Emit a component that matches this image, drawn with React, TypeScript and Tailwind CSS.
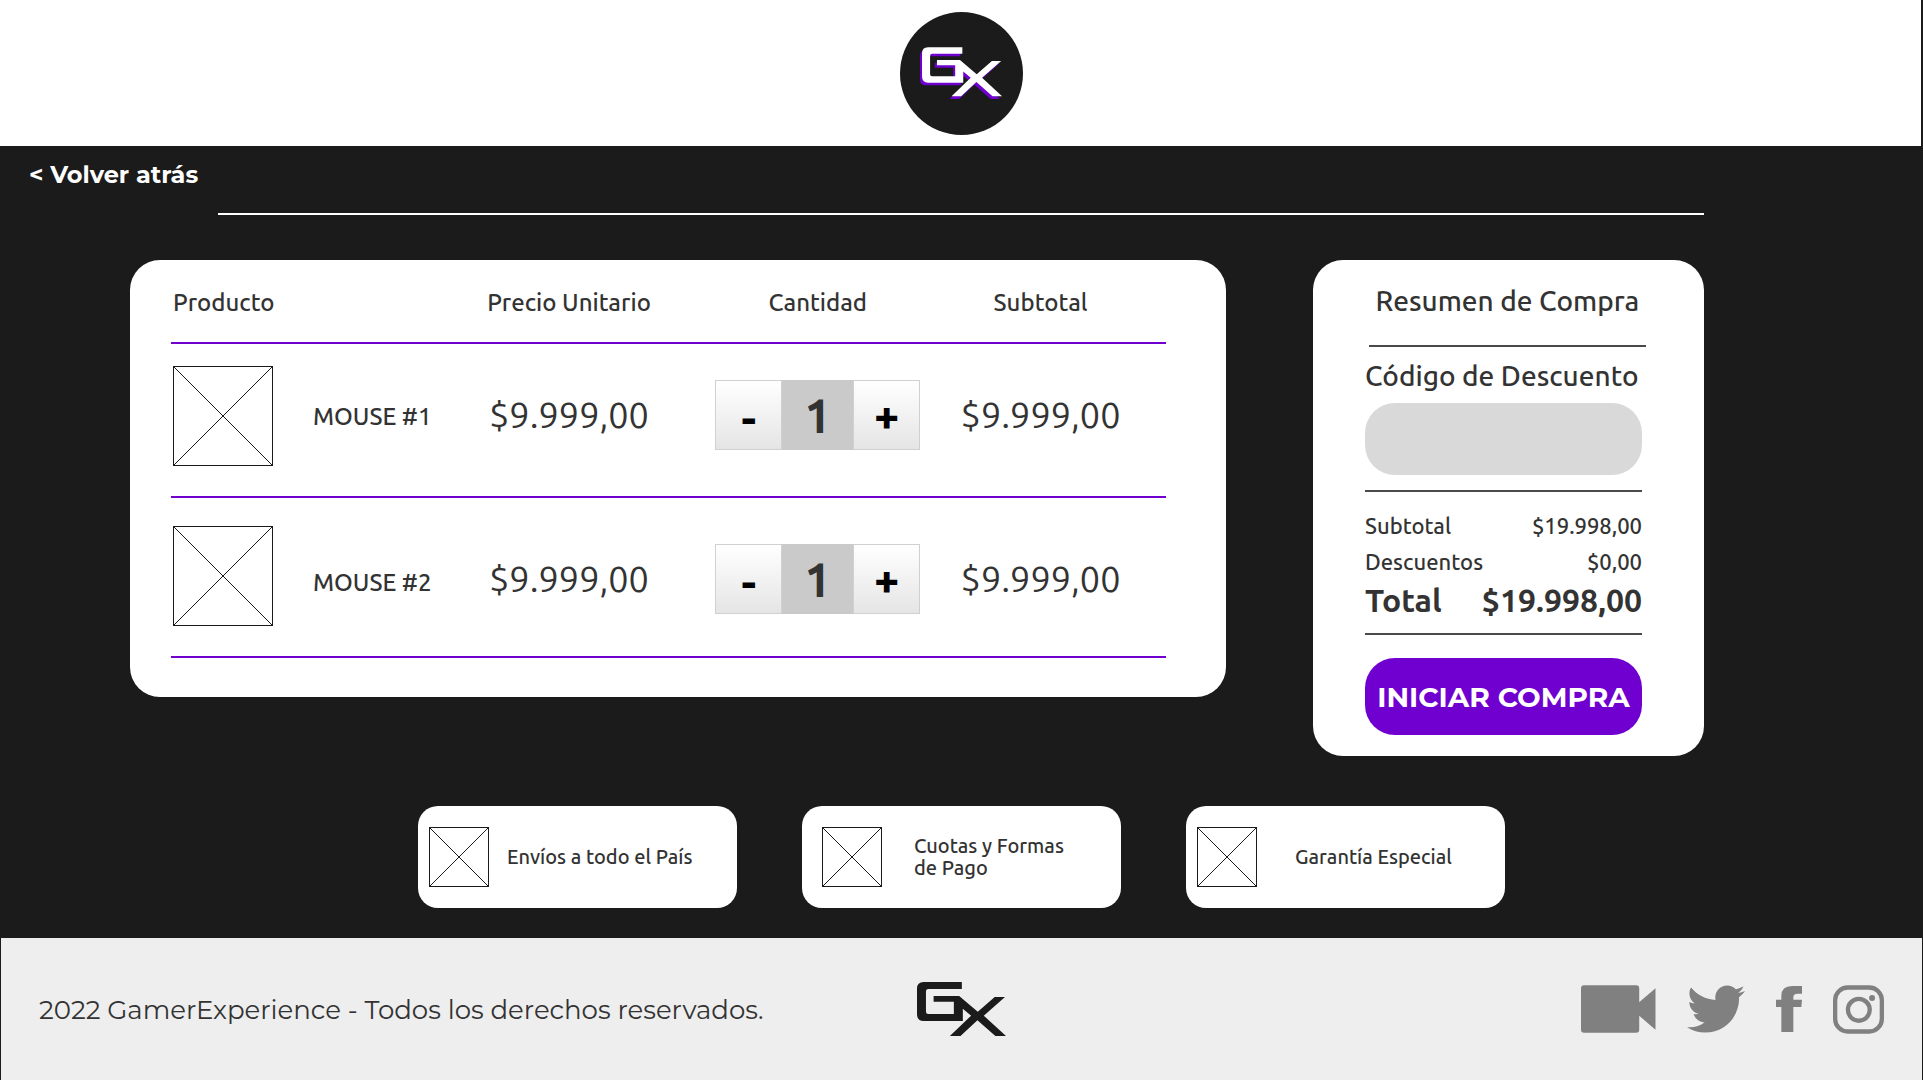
import { useState } from "react";
import { FaTwitter } from "react-icons/fa";

const UBUNTU = "font-[Ubuntu,'Noto_Sans',sans-serif]";
const MONTSERRAT = "font-[Montserrat,'Noto_Sans',sans-serif]";

const GX_PATH =
  "M101 66H216V87H115Q108 87 108 95V155Q108 162 115 162H192V125H131V108H208L264 155L315 111H346L282 167L349 228H317L263 181L212 228H180L244 167L219 146V183H101Q81 183 81 163V86Q81 66 101 66Z";

const products = [
  { name: "MOUSE #1", price: "$9.999,00", imagePad: "pt-[22px] pb-[30px]", namePad: "pt-[22px] pb-7", cellPad: "pt-5 pb-[30px]" },
  { name: "MOUSE #2", price: "$9.999,00", imagePad: "pt-7 pb-[30px]", namePad: "pt-9 pb-6", cellPad: "pt-7 pb-6" },
];

const benefits = [
  { text: ["Envíos a todo el País"], spacing: "gap-[18px] pl-[11px]" },
  { text: ["Cuotas y Formas", "de Pago"], spacing: "gap-8 pl-5" },
  { text: ["Garantía Especial"], spacing: "gap-[38px] pl-[11px]" },
];

function Placeholder({ className }: { className: string }) {
  return (
    <svg viewBox="0 0 100 100" className={className} role="img" aria-label="Imagen" fill="none" stroke="#1b1b1b">
      <rect x="0" y="0" width="100" height="100" strokeWidth="2" vectorEffect="non-scaling-stroke" />
      <path d="M0 0L100 100M100 0L0 100" strokeWidth="1" vectorEffect="non-scaling-stroke" />
    </svg>
  );
}

function Quantity({ name }: { name: string }) {
  const [count, setCount] = useState(1);
  const button =
    "h-[70px] w-[67px] border border-[#d0d0d0] bg-linear-to-b from-white to-[#e5e5e5] pt-1.5 text-[44px] leading-10 font-bold text-black";
  return (
    <div className="flex justify-center">
      <button type="button" aria-label={`Quitar ${name}`} className={`${button} ${MONTSERRAT}`} onClick={() => setCount(Math.max(1, count - 1))}>
        -
      </button>
      <input
        aria-label={`Cantidad de ${name}`}
        value={count}
        readOnly
        className="h-[70px] w-[71px] bg-[#cacaca] text-center text-5xl font-bold"
      />
      <button type="button" aria-label={`Agregar ${name}`} className={`${button} ${MONTSERRAT}`} onClick={() => setCount(count + 1)}>
        +
      </button>
    </div>
  );
}

function Cart() {
  return (
    <section className="min-w-0 flex-1 rounded-[30px] bg-white pr-[60px] pb-[39px] pl-[41px]">
      <table className="w-full table-fixed border-collapse whitespace-nowrap">
        <thead>
          <tr className="h-[83px] border-b-2 border-[#6f00cf] text-2xl">
            <th className="w-[28%] pt-1 pl-0.5 text-left font-medium">Producto</th>
            <th className="w-[24%] pt-1 font-medium">Precio Unitario</th>
            <th className="w-[26%] pt-1 font-medium">Cantidad</th>
            <th className="w-[22%] pt-1 pr-8 font-medium">Subtotal</th>
          </tr>
        </thead>
        <tbody>
          {products.map((p) => (
            <tr key={p.name} className="border-b-2 border-[#6f00cf] text-4xl">
              <td>
                <div className="flex items-stretch gap-10 pl-0.5">
                  <div className={p.imagePad}>
                    <Placeholder className="size-[100px]" />
                  </div>
                  <span className={`flex items-center text-2xl font-medium ${p.namePad}`}>{p.name}</span>
                </div>
              </td>
              <td className={`text-center ${p.cellPad}`}>{p.price}</td>
              <td className={p.cellPad}>
                <Quantity name={p.name} />
              </td>
              <td className={`pr-8 text-center ${p.cellPad}`}>{p.price}</td>
            </tr>
          ))}
        </tbody>
      </table>
    </section>
  );
}

function Summary() {
  return (
    <section className="w-[391px] rounded-[30px] bg-white pt-[25px] pr-[62px] pb-[21px] pl-[52px] font-medium whitespace-nowrap">
      <h2 className="-mr-1 ml-1 border-b-2 border-[#4a4a4a] pb-7 text-center text-[28px] leading-8 font-medium">
        Resumen de Compra
      </h2>
      <div className="border-b-2 border-[#4a4a4a] pt-[13px] pb-[15px]">
        <label htmlFor="discount" className="block text-[28px] leading-8">
          Código de Descuento
        </label>
        <input id="discount" type="text" className="mt-[11px] block h-[72px] w-full rounded-[30px] bg-[#d9d9d9] px-6 text-2xl" />
      </div>
      <dl className="border-b-2 border-[#4a4a4a] pt-4 pb-[13px] text-[22px] leading-9">
        <div className="flex justify-between">
          <dt>Subtotal</dt>
          <dd>$19.998,00</dd>
        </div>
        <div className="flex justify-between">
          <dt>Descuentos</dt>
          <dd>$0,00</dd>
        </div>
        <div className="flex justify-between text-[32px] leading-10 font-bold">
          <dt>Total</dt>
          <dd>$19.998,00</dd>
        </div>
      </dl>
      <button
        type="button"
        className={`mt-[23px] block h-[77px] w-full rounded-[30px] bg-[#6f00cf] text-[28px] font-bold text-white ${MONTSERRAT}`}
      >
        INICIAR COMPRA
      </button>
    </section>
  );
}

function Footer() {
  return (
    <footer className="mx-px grid grow grid-cols-[1fr_auto_1fr] items-center bg-[#eee] px-[38px]">
      <p className={`pt-0.5 text-[26px] whitespace-nowrap ${MONTSERRAT}`}>2022 GamerExperience - Todos los derechos reservados.</p>
      <svg viewBox="81 66 268 162" className="h-[54px] w-[89px]" role="img" aria-label="GX">
        <path d={GX_PATH} fill="#1b1b1b" />
      </svg>
      <nav className="flex items-center justify-end gap-[31px] text-[#808080]">
        <a href="#video" aria-label="Video">
          <svg viewBox="0 0 76 48" className="h-12 w-[75px]" fill="currentColor">
            <rect width="59" height="48" rx="3" />
            <path d="M58 18L75.500 3V45L58 30Z" />
          </svg>
        </a>
        <a href="#twitter" aria-label="Twitter">
          <FaTwitter size={58} />
        </a>
        <a href="#facebook" aria-label="Facebook">
          <svg viewBox="0 0 78 138" className="h-[46px] w-[26px]" fill="currentColor">
            <path d="M16 138V63H0V41H16V30Q16 0 48 0H78V23H64Q52 23 52 34V41H78L76 63H52V138Z" />
          </svg>
        </a>
        <a href="#instagram" aria-label="Instagram">
          <svg viewBox="0 0 154 146" className="h-[49px] w-[51px]" fill="none" stroke="currentColor" strokeWidth="13">
            <rect x="6.500" y="6.500" width="141" height="133" rx="38" />
            <circle cx="78" cy="74" r="33" />
            <circle cx="118" cy="38" r="9" fill="currentColor" stroke="none" />
          </svg>
        </a>
      </nav>
    </footer>
  );
}

export default function App() {
  return (
    <div className={`flex min-h-screen flex-col bg-[#1b1b1b] text-[#333] ${UBUNTU}`}>
      <header className="mr-0.5 flex justify-center bg-white pt-3 pb-[11px] pl-0.5">
        <svg viewBox="60 35 369 369" className="size-[123px]" role="img" aria-label="GX">
          <circle cx="244.500" cy="219.500" r="184.500" fill="#1b1b1b" />
          <path d={GX_PATH} fill="#6f00cf" transform="translate(47.500 89) scale(0.896 0.907)" />
          <path d={GX_PATH} fill="#fff" transform="translate(53.500 81) scale(0.896 0.907)" />
        </svg>
      </header>
      <nav className="pt-[13px] pl-[29px]">
        <a href="#atras" className={`text-2xl font-bold text-white ${MONTSERRAT}`}>
          &lt; Volver atrás
        </a>
      </nav>
      <main className="pt-[22px] pr-[219px] pb-[30px] pl-[130px]">
        <hr className="ml-[88px] border-t-2 border-white" />
        <div className="mt-[45px] flex items-start gap-[87px]">
          <Cart />
          <Summary />
        </div>
      </main>
      <ul className="flex flex-wrap justify-center gap-[65px] pt-5 pb-[30px]">
        {benefits.map((b) => (
          <li
            key={b.text[0]}
            className={`flex h-[102px] w-[319px] items-center rounded-[20px] bg-white text-xl leading-[22px] font-medium ${b.spacing}`}
          >
            <Placeholder className="size-[60px] shrink-0" />
            <p>
              {b.text.map((line) => (
                <span key={line} className="block">
                  {line}
                </span>
              ))}
            </p>
          </li>
        ))}
      </ul>
      <Footer />
    </div>
  );
}
